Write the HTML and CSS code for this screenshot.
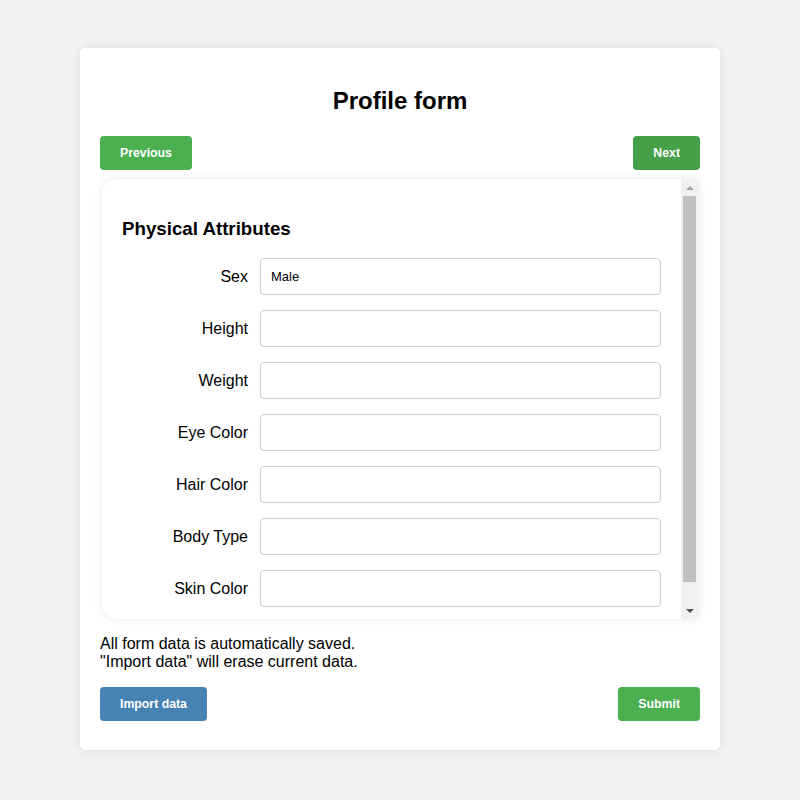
FILE: index.html
```html
<!DOCTYPE html>
<html>
<head>
<meta charset="utf-8">
<title>Profile form</title>
<link rel="stylesheet" href="styles.css">
</head>
<body>
<div class="card">
  <h1 class="title">Profile form</h1>
  <div class="nav-row">
    <button class="btn btn-green">Previous</button>
    <button class="btn btn-green-dark">Next</button>
  </div>
  <div class="panel">
    <div class="panel-content">
      <h3 class="section-title">Physical Attributes</h3>
      <div class="field"><label class="field-label">Sex</label><input class="field-input" type="text" value="Male"></div>
      <div class="field"><label class="field-label">Height</label><input class="field-input" type="text"></div>
      <div class="field"><label class="field-label">Weight</label><input class="field-input" type="text"></div>
      <div class="field"><label class="field-label">Eye Color</label><input class="field-input" type="text"></div>
      <div class="field"><label class="field-label">Hair Color</label><input class="field-input" type="text"></div>
      <div class="field"><label class="field-label">Body Type</label><input class="field-input" type="text"></div>
      <div class="field"><label class="field-label">Skin Color</label><input class="field-input" type="text"></div>
    </div>
    <div class="scrollbar">
      <div class="sb-btn"><span class="arrow-up"></span></div>
      <div class="sb-track"><div class="sb-thumb"></div></div>
      <div class="sb-btn"><span class="arrow-down"></span></div>
    </div>
  </div>
  <p class="note">All form data is automatically saved.<br>"Import data" will erase current data.</p>
  <div class="nav-row">
    <button class="btn btn-blue">Import data</button>
    <button class="btn btn-green">Submit</button>
  </div>
</div>
</body>
</html>
```

FILE: styles.css
```css
html, body {
  margin: 0;
  padding: 0;
}
body {
  background: #f2f2f2;
  font-family: "Liberation Sans", Arial, sans-serif;
  color: #000;
  padding-top: 48px;
  height: 800px;
  box-sizing: border-box;
}
.card {
  width: 640px;
  box-sizing: border-box;
  margin: 0 auto;
  background: #fff;
  border-radius: 5px;
  box-shadow: 0 0 10px rgba(0, 0, 0, 0.1);
  padding: 39px 20px 29px;
}
.title {
  margin: 0 0 21px;
  font-size: 24px;
  line-height: 28px;
  font-weight: bold;
  text-align: center;
}
.nav-row {
  display: flex;
  justify-content: space-between;
  align-items: center;
}
.btn {
  height: 34px;
  padding: 0 20px;
  border: none;
  border-radius: 4px;
  color: #fff;
  font-family: "Liberation Sans", Arial, sans-serif;
  font-weight: bold;
  font-size: 12.3px;
  cursor: pointer;
}
.btn-green { background: #4caf50; }
.btn-green-dark { background: #45a049; }
.btn-blue { background: #4682b4; }
.panel {
  margin: 9px 2px 0;
  height: 440px;
  display: flex;
  overflow: hidden;
  border-radius: 15px 0 0 15px;
  background: #fff;
  box-shadow: 0 0 10px rgba(0, 0, 0, 0.1);
}
.panel-content {
  flex: 1;
  min-width: 0;
  padding: 20px 20px 0;
  overflow: hidden;
}
.section-title {
  margin: 18.72px 0;
  font-size: 18.72px;
  font-weight: bold;
}
.field {
  display: grid;
  grid-template-columns: 126px 1fr;
  column-gap: 12px;
  align-items: center;
  margin-bottom: 15px;
}
.field-label {
  text-align: right;
  font-size: 16px;
}
.field-input {
  height: 37px;
  box-sizing: border-box;
  width: 100%;
  border: 1px solid #ccc;
  border-radius: 4px;
  padding: 0 10px;
  font-family: "Liberation Sans", Arial, sans-serif;
  font-size: 13px;
  color: #000;
  margin: 0;
}
.scrollbar {
  width: 17px;
  flex: none;
  background: #f1f1f1;
  display: flex;
  flex-direction: column;
}
.sb-btn {
  height: 17px;
  display: flex;
  align-items: center;
  justify-content: center;
}
.arrow-up {
  width: 0;
  height: 0;
  border-left: 4px solid transparent;
  border-right: 4px solid transparent;
  border-bottom: 4px solid #a3a3a3;
}
.arrow-down {
  width: 0;
  height: 0;
  border-left: 4px solid transparent;
  border-right: 4px solid transparent;
  border-top: 4px solid #505050;
}
.sb-track {
  flex: 1;
  padding: 0 2px;
}
.sb-thumb {
  height: 386px;
  background: #c1c1c1;
}
.note {
  margin: 16px 0 15px;
  font-size: 16px;
  line-height: 18.4px;
}
```
